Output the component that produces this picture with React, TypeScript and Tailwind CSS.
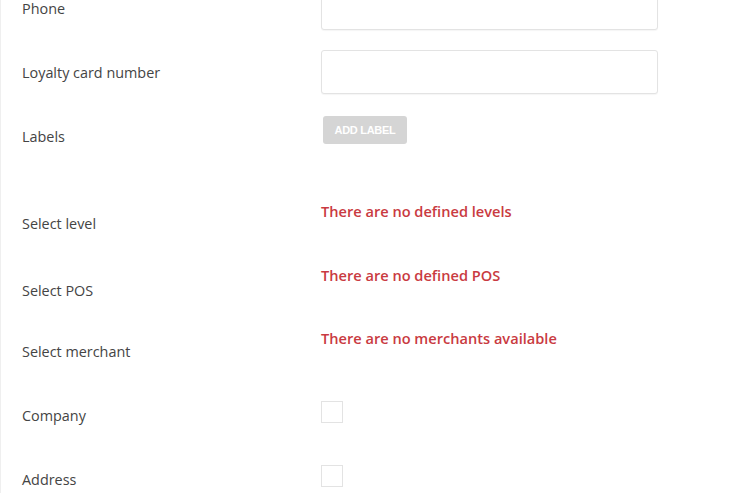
import React from 'react';

function TextInput() {
    return <input type="text" className="w-[337px] h-[44px] rounded-[3px] border border-[#e3e3e3] bg-white shadow-[0_1px_1px_rgba(0,0,0,0.04)] outline-none" />
}

function Checkbox() {
    return <div className="w-[22px] h-[22px] border border-[#e3e3e3] bg-white"></div>
}

function App() {
    return (
        <div className="w-full h-[493px] overflow-hidden bg-white">
            <div className="-mt-[14px] pl-[21px] border-l border-[#efefef] h-[520px] text-[14.4px] leading-[20px] text-[#444]" style={{ fontFamily: '"Open Sans", sans-serif' }}>
                <div className="flex items-center h-[44px]">
                    <div className="w-[299px] pt-[2px]">Phone</div>
                    <TextInput />
                </div>
                <div className="flex items-center h-[44px] mt-[20px]">
                    <div className="w-[299px] pt-[2px]">Loyalty card number</div>
                    <TextInput />
                </div>
                <div className="flex items-start h-[28px] mt-[22px]">
                    <div className="w-[299px] pt-[11px]">Labels</div>
                    <button className="ml-[2px] w-[84px] h-[28px] rounded-[3px] bg-[#d5d5d5] text-white text-[11px] leading-[28px] font-bold tracking-[-0.3px]" style={{ fontFamily: '"Liberation Sans", Arial, sans-serif' }}>ADD LABEL</button>
                </div>
                <div className="flex items-start h-[64px] mt-[58px]">
                    <div className="w-[299px] pt-[12px]">Select level</div>
                    <div className="font-semibold text-[14.6px] leading-[18px] text-[#c93a41]">There are no defined levels</div>
                </div>
                <div className="flex items-start h-[63px]">
                    <div className="w-[299px] pt-[15px]">Select POS</div>
                    <div className="font-semibold text-[14.6px] leading-[18px] text-[#c93a41]">There are no defined POS</div>
                </div>
                <div className="flex items-start h-[72px]">
                    <div className="w-[299px] pt-[13px]">Select merchant</div>
                    <div className="font-semibold text-[14.6px] leading-[18px] text-[#c93a41]">There are no merchants available</div>
                </div>
                <div className="flex items-start h-[64px]">
                    <div className="w-[299px] pt-[5px]">Company</div>
                    <Checkbox />
                </div>
                <div className="flex items-start h-[64px]">
                    <div className="w-[299px] pt-[5px]">Address</div>
                    <Checkbox />
                </div>
            </div>
        </div>
    );
}

export default App;
